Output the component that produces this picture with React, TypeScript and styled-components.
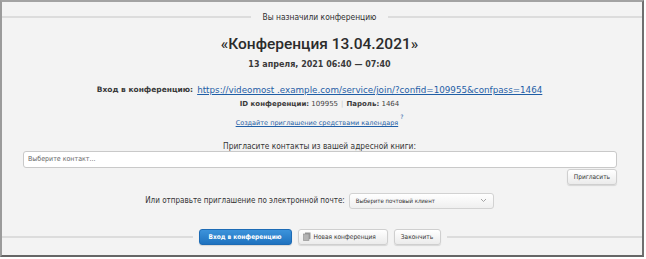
import styled, { createGlobalStyle } from 'styled-components'

const GlobalStyle = createGlobalStyle`
  html, body {
    margin: 0;
    padding: 0;
    background: #fff;
  }
  body {
    font-family: "DejaVu Sans", Verdana, sans-serif;
    color: #333;
  }
`

const Frame = styled.div`
  box-sizing: border-box;
  width: 644px;
  height: 257px;
  background: #f3f3f3;
  border-left: 2px solid #9b9b9b;
  border-top: 2px solid #a3a3a3;
  border-right: 2px solid #6f6f6f;
  border-bottom: 2px solid #666;
  display: flex;
  flex-direction: column;
`

const Rule = styled.div<{ $top: number }>`
  display: grid;
  grid-template-columns: 1fr auto 1fr;
  align-items: center;
  margin-top: ${(p) => p.$top}px;
  padding-right: 5px;
`

const Line = styled.div<{ $right?: boolean }>`
  height: 2px;
  background: #dcdcdc;
  margin-right: ${(p) => (p.$right ? '-5px' : '0')};
`

const RuleCaption = styled.div`
  padding: 0 12px;
  font-family: "DejaVu Sans Condensed", "DejaVu Sans", sans-serif;
  font-size: 8.4px;
  line-height: 12px;
  color: #2e2e2e;
`

const Title = styled.h1`
  margin: 10px 5px 0 0;
  text-align: center;
  font-family: Roboto, "Liberation Sans", sans-serif;
  font-weight: 500;
  font-size: 15.5px;
  line-height: 22px;
  color: #2b2b2b;
`

const Row = styled.div<{ $top: number; $size?: number }>`
  margin-top: ${(p) => p.$top}px;
  padding-right: 5px;
  display: flex;
  justify-content: center;
  align-items: center;
  gap: 4px;
  font-size: ${(p) => p.$size ?? 8}px;
  line-height: 12px;
  white-space: nowrap;
`

const Strong = styled.b`
  font-weight: bold;
  color: #3a3a3a;
`

const EntryLabel = styled(Strong)`
  font-size: 7.5px;
`

const Value = styled.span`
  color: #444;
`

const Sep = styled.span`
  color: #c8c8c8;
  margin: 0 3px;
`

const Link = styled.a`
  color: #1f5ea6;
  text-decoration: underline;
  cursor: pointer;
`

const EntryLink = styled(Link)`
  font-size: 8.75px;
`

const SmallLink = styled(Link)`
  font-size: 6.5px;
`

const Help = styled.sup`
  font-size: 6px;
  color: #1f5ea6;
  margin-left: 2px;
  position: relative;
  top: -2px;
`

const InviteLabel = styled.div`
  margin-top: 12px;
  padding-right: 5px;
  text-align: center;
  font-family: "DejaVu Sans Condensed", "DejaVu Sans", sans-serif;
  font-size: 8.3px;
  line-height: 10px;
  color: #333;
`

const ContactInput = styled.input`
  box-sizing: border-box;
  margin: 0 0 0 21px;
  width: 594px;
  height: 17px;
  padding: 0 4px;
  border: 1px solid #c9c9c9;
  border-radius: 3px;
  background: #fff;
  font-family: "DejaVu Sans Condensed", "DejaVu Sans", sans-serif;
  font-size: 7px;
  color: #555;
  outline: none;

  &::placeholder {
    color: #666;
  }
`

const InviteBar = styled.div`
  width: 615px;
  display: flex;
  justify-content: flex-end;
  margin-top: 1px;
`

const Button = styled.button<{ $primary?: boolean }>`
  box-sizing: border-box;
  height: 16px;
  padding: 0 6px;
  display: inline-flex;
  align-items: center;
  gap: 3px;
  border-radius: 3px;
  font-family: "DejaVu Sans Condensed", "DejaVu Sans", sans-serif;
  font-size: 6.5px;
  font-weight: ${(p) => (p.$primary ? 'bold' : 'normal')};
  cursor: pointer;
  border: 1px solid ${(p) => (p.$primary ? '#1d6bb5' : '#cfcfcf')};
  color: ${(p) => (p.$primary ? '#fff' : '#333')};
  background: ${(p) =>
    p.$primary
      ? 'linear-gradient(#3c93db, #1f72bf)'
      : 'linear-gradient(#ffffff, #ebebeb)'};
  box-shadow: 0 1px 1px rgba(0, 0, 0, 0.12);
`

const EmailRow = styled.div`
  margin-top: 8px;
  padding-right: 5px;
  display: flex;
  justify-content: center;
  align-items: center;
  gap: 4px;
  font-family: "DejaVu Sans Condensed", "DejaVu Sans", sans-serif;
  font-size: 8px;
  color: #333;
`

const Select = styled.div`
  box-sizing: border-box;
  width: 145px;
  height: 16px;
  padding: 0 6px 0 6px;
  display: flex;
  align-items: center;
  justify-content: space-between;
  border: 1px solid #d2d2d2;
  border-radius: 3px;
  background: linear-gradient(#ffffff, #efefef);
  font-size: 6px;
  color: #333;
`

const ButtonGroup = styled.div`
  display: flex;
  gap: 6px;
  padding: 0 6px;
`

const PageIcon = () => (
  <svg width="8" height="9" viewBox="0 0 8 9">
    <rect x="2" y="0.5" width="5.5" height="6.5" fill="#9a9a9a" />
    <rect x="0.5" y="2" width="5.5" height="6.5" fill="#b5b5b5" stroke="#8c8c8c" strokeWidth="0.6" />
  </svg>
)

const Chevron = () => (
  <svg width="7" height="5" viewBox="0 0 7 5">
    <path d="M1 1 L3.5 3.5 L6 1" fill="none" stroke="#9a9a9a" strokeWidth="0.9" />
  </svg>
)

export default function App() {
  return (
    <>
      <GlobalStyle />
      <Frame>
        <Rule $top={9}>
          <Line />
          <RuleCaption>Вы назначили конференцию</RuleCaption>
          <Line $right />
        </Rule>

        <Title>«Конференция 13.04.2021»</Title>

        <Row $top={4}>
          <Strong>13 апреля, 2021 06:40 — 07:40</Strong>
        </Row>

        <Row $top={13}>
          <EntryLabel>Вход в конференцию:</EntryLabel>
          <EntryLink>https://videomost .example.com/service/join/?confid=109955&amp;confpass=1464</EntryLink>
        </Row>

        <Row $top={2} $size={7}>
          <span>
            <Strong>ID конференции:</Strong> <Value>109955</Value>
            <Sep>|</Sep>
            <Strong>Пароль:</Strong> <Value>1464</Value>
          </span>
        </Row>

        <Row $top={3}>
          <span>
            <SmallLink>Создайте приглашение средствами календаря</SmallLink>
            <Help>?</Help>
          </span>
        </Row>

        <InviteLabel>Пригласите контакты из вашей адресной книги:</InviteLabel>
        <ContactInput placeholder="Выберите контакт..." />
        <InviteBar>
          <Button>Пригласить</Button>
        </InviteBar>

        <EmailRow>
          Или отправьте приглашение по электронной почте:
          <Select>
            <span>Выберите почтовый клиент</span>
            <Chevron />
          </Select>
        </EmailRow>

        <Rule $top={20}>
          <Line />
          <ButtonGroup>
            <Button $primary style={{ width: 93, justifyContent: 'center' }}>Вход в конференцию</Button>
            <Button style={{ width: 90, paddingLeft: 4 }}>
              <PageIcon />
              Новая конференция
            </Button>
            <Button style={{ width: 47, justifyContent: 'center' }}>Закончить</Button>
          </ButtonGroup>
          <Line $right />
        </Rule>
      </Frame>
    </>
  )
}
